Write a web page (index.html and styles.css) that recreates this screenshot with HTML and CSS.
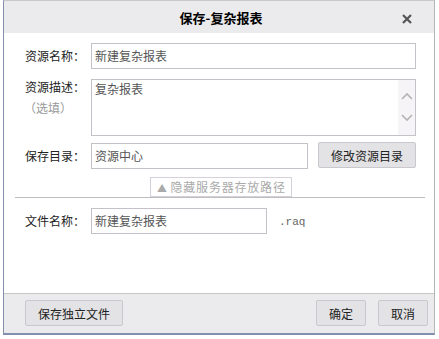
FILE: index.html
```html
<!DOCTYPE html>
<html lang="zh-CN">
<head>
    <meta charset="UTF-8">
    <title>保存-复杂报表</title>
    <link rel="stylesheet" href="styles.css">
</head>
<body>
    <div class="dialog">
        <!-- Header -->
        <div class="dialog-header">
            <span class="dialog-title">保存-复杂报表</span>
            <svg class="close-btn" width="10" height="10" viewBox="0 0 10 10"><path d="M1 1 L9 9 M9 1 L1 9" stroke="#555" stroke-width="2.2"/></svg>
        </div>

        <div class="dialog-body">
            <div class="form-row">
                <label class="form-label">资源名称：</label>
                <div class="text-input name-input">新建复杂报表</div>
            </div>

            <div class="form-row row-desc">
                <div class="form-label label-stack">
                    <span>资源描述：</span>
                    <span class="optional">（选填）</span>
                </div>
                <div class="text-area">
                    <div class="area-text">复杂报表</div>
                    <div class="scrollbar">
                        <svg width="12" height="8" viewBox="0 0 12 8"><path d="M1 7 L6 2 L11 7" fill="none" stroke="#b4b4b4" stroke-width="1.6"/></svg>
                        <svg width="12" height="8" viewBox="0 0 12 8"><path d="M1 1 L6 6 L11 1" fill="none" stroke="#b4b4b4" stroke-width="1.6"/></svg>
                    </div>
                </div>
            </div>

            <div class="form-row row-dir">
                <label class="form-label">保存目录：</label>
                <div class="text-input dir-input">资源中心</div>
                <button class="btn dir-btn">修改资源目录</button>
            </div>

            <div class="toggle-row">
                <span class="toggle-link"><span class="toggle-arrow">&#9650;</span> 隐藏服务器存放路径</span>
            </div>
            <div class="separator"></div>

            <div class="form-row row-file">
                <label class="form-label">文件名称：</label>
                <div class="text-input file-input">新建复杂报表</div>
                <span class="file-ext">.raq</span>
            </div>
        </div>

        <!-- Footer -->
        <div class="dialog-footer">
            <button class="btn save-alone">保存独立文件</button>
            <div class="footer-right">
                <button class="btn small-btn">确定</button>
                <button class="btn small-btn">取消</button>
            </div>
        </div>
    </div>
</body>
</html>
```

FILE: styles.css
```css
:root {
    --label-color: #222;
    --input-text: #555;
    --input-border: #c4c2c8;
    --panel-bg: #ebeaed;
    --frame-blue: #8390ad;
}

* {
    margin: 0;
    padding: 0;
    box-sizing: border-box;
    font-family: "Noto Sans CJK SC", "Liberation Sans", sans-serif;
}

body {
    background: #fff;
    font-size: 12px;
    color: var(--label-color);
}

.dialog {
    margin-left: 3px;
    width: 432px;
    height: 335px;
    display: flex;
    flex-direction: column;
    border-top: 1px solid #c8c8c8;
    border-left: 1px solid var(--frame-blue);
    border-right: 1px solid #b4b4b4;
    border-bottom: 2px solid var(--frame-blue);
}

/* Header */
.dialog-header {
    position: relative;
    height: 32px;
    background: var(--panel-bg);
    display: flex;
    align-items: center;
    justify-content: center;
}

.dialog-title {
    font-size: 13px;
    font-weight: 700;
    color: #000;
    margin-left: 4px;
}

.close-btn {
    position: absolute;
    right: 22px;
    top: 13px;
}

/* Body */
.dialog-body {
    height: 260px;
    padding: 10px 0 0 21px;
}

.form-row {
    display: flex;
    align-items: center;
}

.form-label {
    width: 66px;
    line-height: 16px;
    color: var(--label-color);
}

.text-input {
    height: 26px;
    line-height: 24px;
    padding-left: 3px;
    border: 1px solid var(--input-border);
    color: var(--input-text);
}

.name-input {
    width: 325px;
}

.row-desc {
    margin-top: 10px;
    align-items: flex-start;
}

.label-stack {
    display: flex;
    flex-direction: column;
}

.optional {
    color: #999;
    margin-top: 5px;
    margin-left: -1px;
}

.text-area {
    width: 325px;
    height: 57px;
    border: 1px solid var(--input-border);
    display: flex;
    justify-content: space-between;
}

.area-text {
    padding: 1px 0 0 3px;
    line-height: 16px;
    color: var(--input-text);
}

.scrollbar {
    width: 17px;
    background: #f6f4f7;
    display: flex;
    flex-direction: column;
    align-items: center;
    padding-top: 12px;
    gap: 14px;
}

.row-dir {
    margin-top: 7px;
}

.dir-input {
    width: 217px;
}

.btn {
    background: #e3e2e5;
    border: 1px solid #c9c8cc;
    border-radius: 2px;
    font-size: 12px;
    color: #222;
    height: 26px;
}

.dir-btn {
    margin-left: 10px;
    width: 98px;
    margin-top: -2px;
}

.toggle-row {
    margin-top: 8px;
    padding-left: 125px;
    height: 20px;
}

.toggle-link {
    display: inline-block;
    width: 142px;
    height: 20px;
    line-height: 18px;
    border: 1px solid #d6d0da;
    color: #aaa;
    font-size: 12px;
    letter-spacing: 0.8px;
    padding-left: 6px;
}

.toggle-arrow {
    font-size: 10px;
    letter-spacing: 0;
}

.separator {
    margin-left: -10px;
    width: 410px;
    border-top: 1px solid #bdbdbd;
}

.row-file {
    margin-top: 10px;
}

.file-input {
    width: 176px;
}

.file-ext {
    margin-left: 12px;
    font-family: "Liberation Mono", monospace;
    font-size: 11px;
    color: #666;
    padding-top: 2px;
}

/* Footer */
.dialog-footer {
    height: 40px;
    border-top: 1px solid #c8c8c8;
    background: var(--panel-bg);
    display: flex;
    justify-content: space-between;
    padding: 6px 6px 0 21px;
}

.save-alone {
    width: 98px;
}

.footer-right {
    display: flex;
    gap: 12px;
}

.small-btn {
    width: 50px;
}
```
